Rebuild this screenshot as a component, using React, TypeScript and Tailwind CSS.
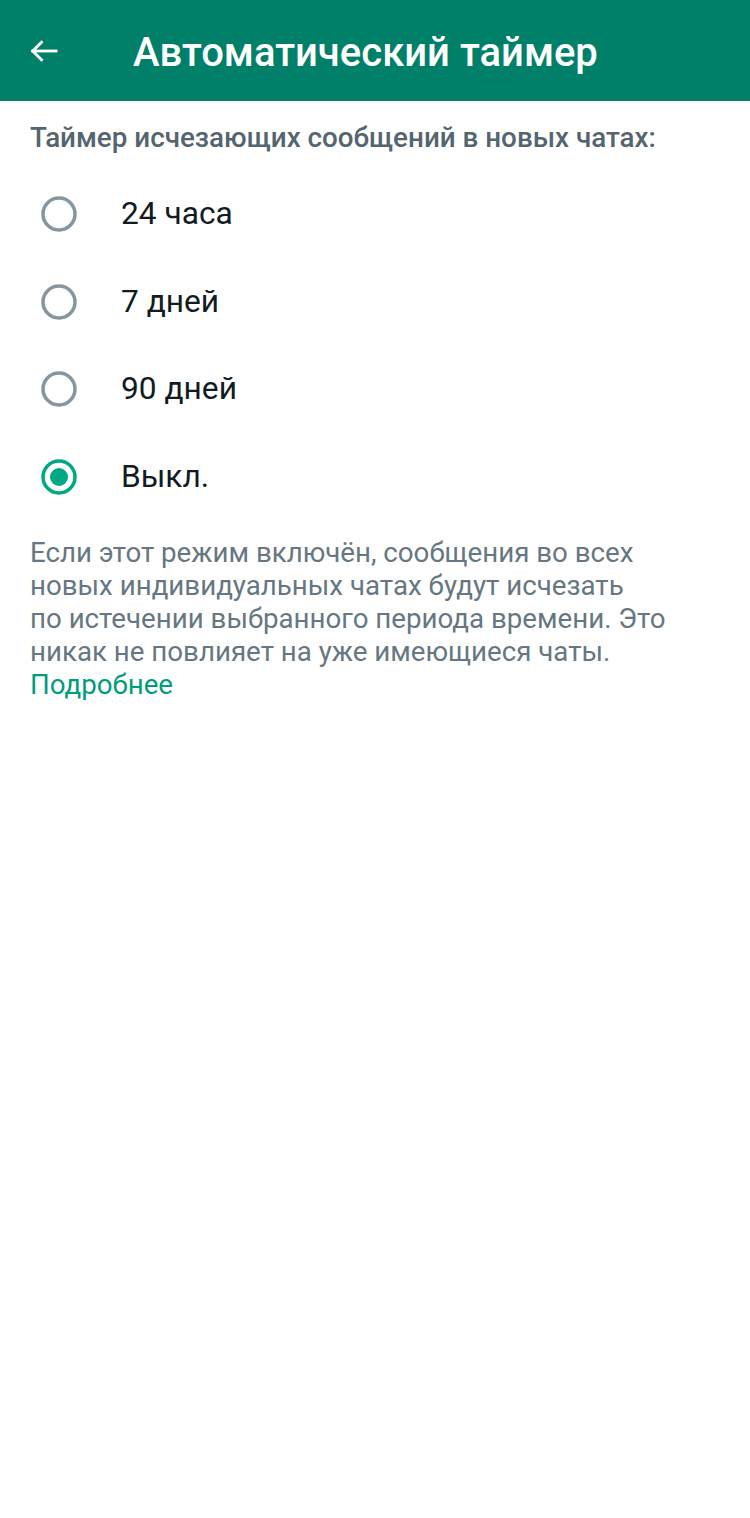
import React from "react";

const options = [
  { label: "24 часа", checked: false },
  { label: "7 дней", checked: false },
  { label: "90 дней", checked: false },
  { label: "Выкл.", checked: true },
];

function Radio({ checked }: { checked: boolean }) {
  return (
    <svg width="38" height="38" viewBox="0 0 38 38">
      <circle
        cx="19"
        cy="19"
        r="16"
        fill="none"
        stroke={checked ? "#00a884" : "#8696a0"}
        strokeWidth="3.5"
      />
      {checked && <circle cx="19" cy="19" r="9" fill="#00a884" />}
    </svg>
  );
}

export default function App() {
  return (
    <div className="w-[750px] h-[1518px] bg-white" style={{ fontFamily: "Roboto, 'Noto Sans', sans-serif" }}>
      <div className="h-[101px] bg-[#008069] flex items-center">
        <div className="w-[133px] flex items-center pl-[26px]">
          <svg width="36" height="36" viewBox="0 0 24 24" fill="none" stroke="white" strokeWidth="1.9" strokeLinecap="square">
            <path d="M20 12H4.5" />
            <path d="M11 5.5L4.5 12l6.5 6.5" strokeLinecap="butt" />
          </svg>
        </div>
        <h1 className="text-white text-[40px] font-medium leading-none mt-[4px]">Автоматический таймер</h1>
      </div>
      <div className="pl-[30px] pt-[21px]">
        <p className="text-[#54656f] text-[27.8px] font-medium leading-[32px] whitespace-nowrap">Таймер исчезающих сообщений в новых чатах:</p>
      </div>
      <div className="flex flex-col mt-[16px]">
        {options.map((o) => (
          <div key={o.label} className="h-[87.7px] flex items-center">
            <div className="w-[121px] pl-[40px] flex items-center">
              <Radio checked={o.checked} />
            </div>
            <span className="text-[31.7px] text-[#111b21] leading-none">{o.label}</span>
          </div>
        ))}
      </div>
      <div className="pl-[30px] pt-[15px]">
        <p className="text-[#667781] text-[27.7px] leading-[33px] whitespace-nowrap">
          Если этот режим включён, сообщения во всех
          <br />
          новых индивидуальных чатах будут исчезать
          <br />
          по истечении выбранного периода времени. Это
          <br />
          никак не повлияет на уже имеющиеся чаты.
        </p>
        <p className="text-[#009d7c] text-[27.7px] leading-[33px]">Подробнее</p>
      </div>
    </div>
  );
}
